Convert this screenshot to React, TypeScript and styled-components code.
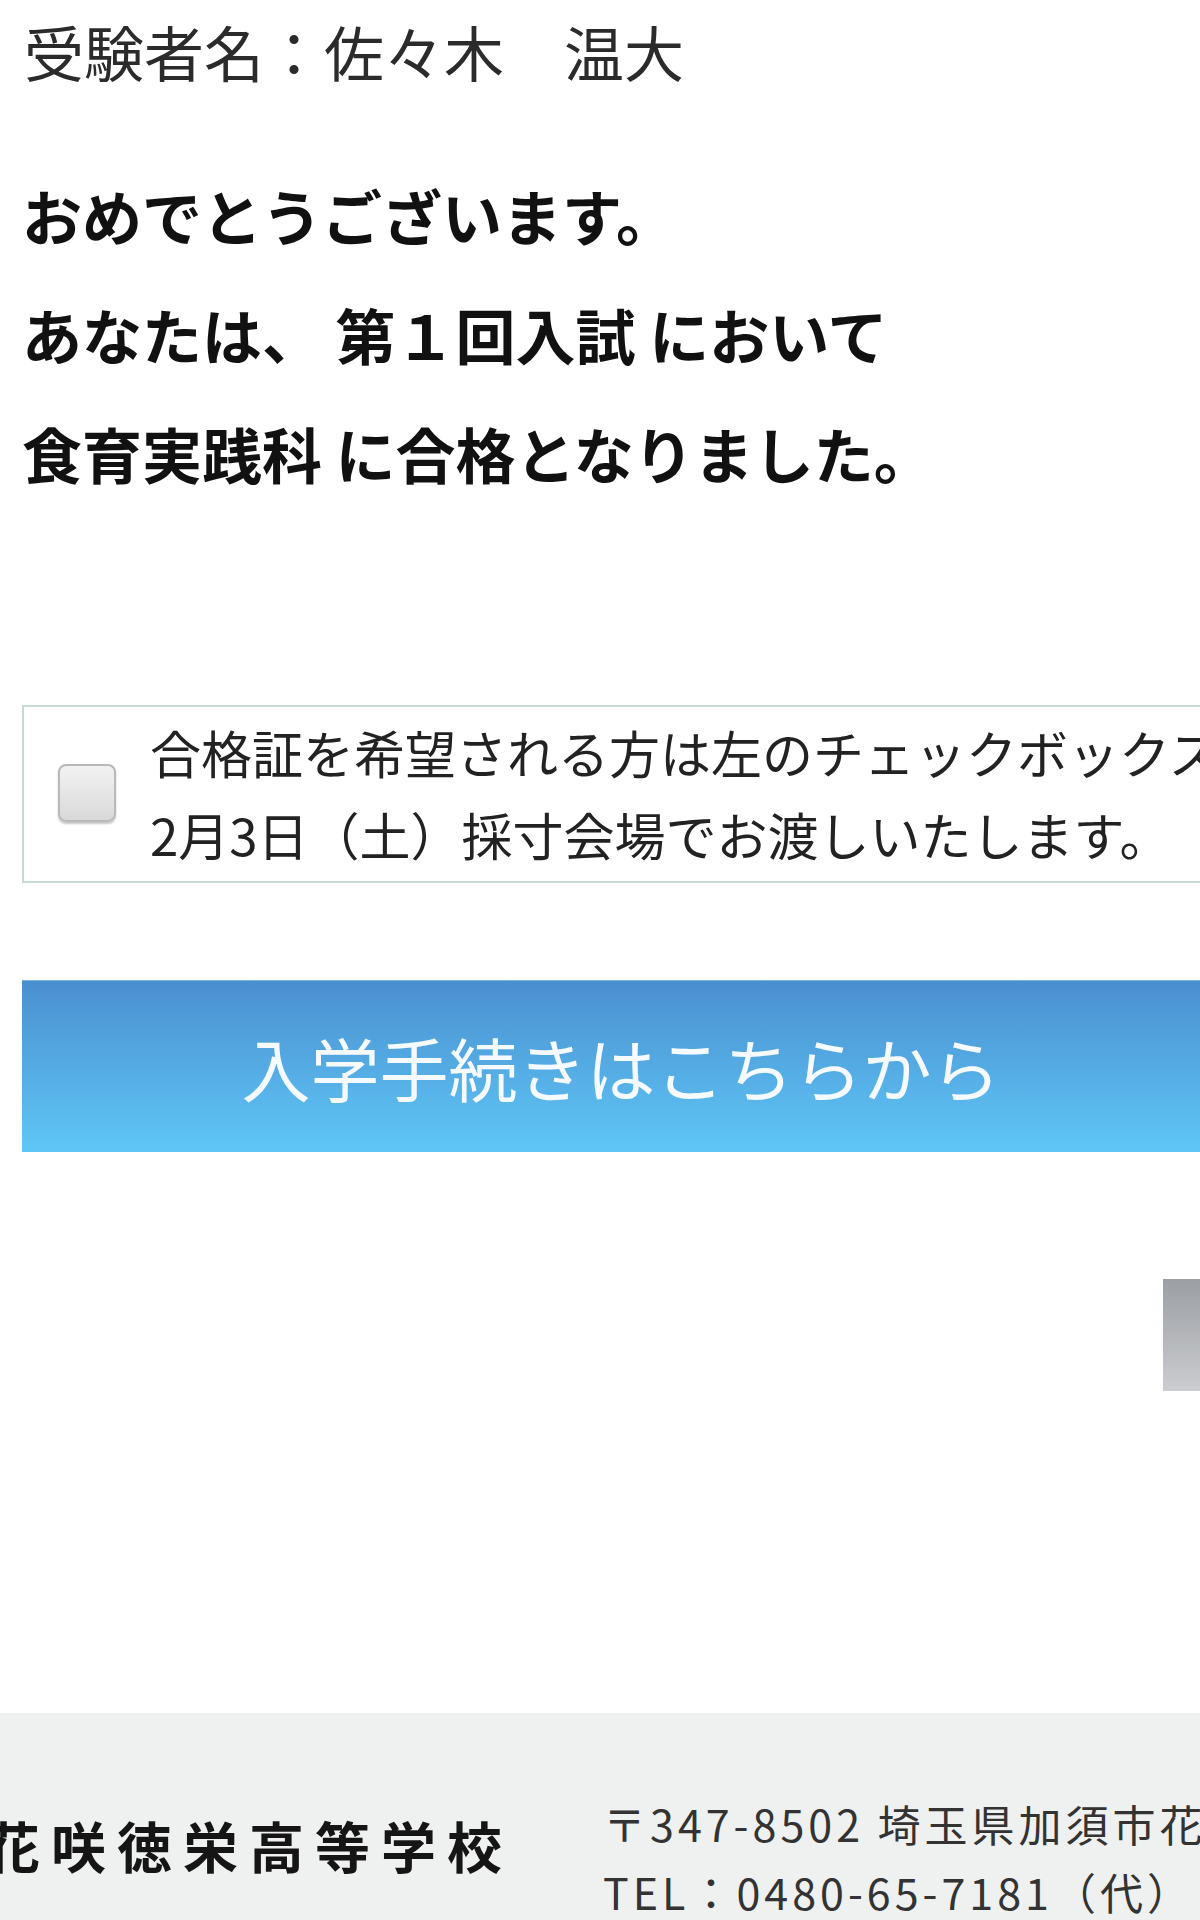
import styled, { createGlobalStyle } from 'styled-components';

const GlobalStyle = createGlobalStyle`
  html, body {
    margin: 0;
    padding: 0;
    background: #ffffff;
    overflow-x: hidden;
  }

  body {
    font-family: "Noto Sans CJK JP", "Noto Sans", sans-serif;
    color: #222;
  }
`;

export default function App() {
  return (
    <>
      <GlobalStyle />
      <Main>
        <ExamineeName>受験者名：佐々木　温大</ExamineeName>

        <Message>
          <MessageLine>おめでとうございます。</MessageLine>
          <MessageLine>あなたは、 第１回入試 において</MessageLine>
          <MessageLine>食育実践科 に合格となりました。</MessageLine>
        </Message>

        <NoticeBox>
          <CheckBox type="checkbox" />
          <NoticeText>
            <NoticeLine>合格証を希望される方は左のチェックボックスにチェックを入れてください。</NoticeLine>
            <NoticeLine>2月3日（土）採寸会場でお渡しいたします。</NoticeLine>
          </NoticeText>
        </NoticeBox>

        <ProcedureButton type="button">入学手続きはこちらから</ProcedureButton>

        <ActionRow>
          <SideButton type="button" aria-label="戻る" />
        </ActionRow>
      </Main>

      <Footer>
        <SchoolName>花咲徳栄高等学校</SchoolName>
        <Address>
          <AddressLine>〒347-8502 埼玉県加須市花崎519</AddressLine>
          <AddressLine>TEL：0480-65-7181（代）</AddressLine>
        </Address>
      </Footer>
    </>
  );
}

// Styled Components
const Main = styled.main`
  display: flex;
  flex-direction: column;
  padding: 11px 0 0 22px;
`;

const ExamineeName = styled.p`
  margin: 0;
  padding-left: 2px;
  font-size: 60px;
  line-height: 80px;
  color: #2b2b2b;
  white-space: nowrap;
`;

const Message = styled.div`
  margin-top: 64px;
`;

const MessageLine = styled.p`
  margin: 0;
  font-size: 60px;
  font-weight: 700;
  line-height: 119px;
  color: #111;
  white-space: nowrap;
`;

const NoticeBox = styled.label`
  display: flex;
  align-items: center;
  box-sizing: border-box;
  width: 1198px;
  margin-top: 193px;
  padding: 4px 0 6px 34px;
  border: 2px solid #c6d9d4;
  overflow: hidden;
`;

const CheckBox = styled.input`
  appearance: none;
  flex: none;
  box-sizing: border-box;
  width: 58px;
  height: 58px;
  margin: 0 34px 0 0;
  border: 2px solid #b9b9b9;
  border-radius: 8px;
  background: linear-gradient(#f2f2f2, #d9d9d9);
  box-shadow: 0 2px 2px rgba(0, 0, 0, 0.22);
`;

const NoticeText = styled.div`
  display: flex;
  flex-direction: column;
`;

const NoticeLine = styled.span`
  font-size: 51px;
  line-height: 82px;
  color: #222;
  white-space: nowrap;
`;

const ProcedureButton = styled.button`
  display: flex;
  align-items: center;
  justify-content: center;
  width: 1198px;
  height: 172px;
  margin-top: 97px;
  padding: 0;
  border: none;
  border-top: 1px solid #7fb2de;
  background: linear-gradient(#4a8fd0, #5fc7f7);
  color: #f4faff;
  font-family: inherit;
  font-size: 69px;
  white-space: nowrap;
`;

const ActionRow = styled.div`
  display: flex;
  justify-content: flex-end;
  width: 1198px;
  margin-top: 127px;
`;

const SideButton = styled.button`
  width: 57px;
  height: 112px;
  padding: 0;
  border: none;
  background: linear-gradient(#9b9ea3, #cbcdd0);
`;

const Footer = styled.footer`
  display: flex;
  align-items: flex-start;
  gap: 90px;
  margin-top: 322px;
  padding: 76px 0 40px;
  background: #eff0f0;
  white-space: nowrap;
`;

const SchoolName = styled.div`
  margin: 22px 0 0 -15px;
  font-size: 55px;
  font-weight: 700;
  line-height: 66px;
  letter-spacing: 11px;
  color: #151515;
`;

const Address = styled.div`
  display: flex;
  flex-direction: column;
`;

const AddressLine = styled.span`
  font-size: 43px;
  line-height: 68px;
  letter-spacing: 4px;
  color: #333;
`;
